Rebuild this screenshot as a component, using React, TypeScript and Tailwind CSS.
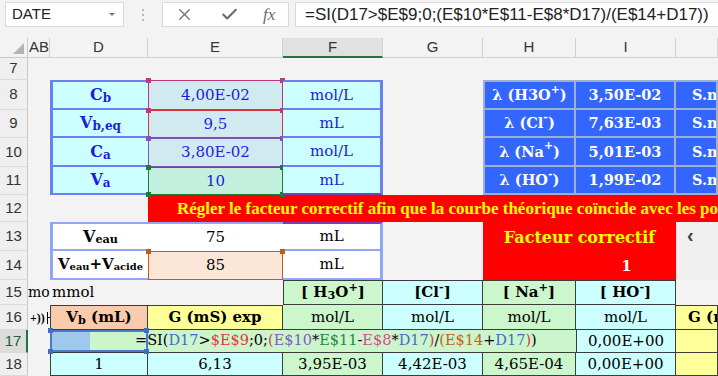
import React from 'react';
import { X, Check } from 'lucide-react';

// Sheet geometry: columns (row header, AB, D..J) and rows (header, 7..18)
const serif = "font-['DejaVu_Serif',serif]";
const sans = "font-['Liberation_Sans',Arial,sans-serif]";

const ROW_NUMBERS = [7, 8, 9, 10, 11, 12, 13, 14, 15, 16, 17, 18];
const ROW_STARTS = [
  'row-start-2', 'row-start-3', 'row-start-4', 'row-start-5', 'row-start-6', 'row-start-7',
  'row-start-8', 'row-start-9', 'row-start-10', 'row-start-11', 'row-start-12', 'row-start-13',
];

const COL_HEADERS = [
  { label: 'AB', cls: 'col-start-2 justify-start pl-[1px]' },
  { label: 'D', cls: 'col-start-3' },
  { label: 'E', cls: 'col-start-4' },
  { label: 'F', cls: 'col-start-5 bg-[#e1e1e1] text-[#1f6b3a] border-b-2 border-b-[#217346]' },
  { label: 'G', cls: 'col-start-6' },
  { label: 'H', cls: 'col-start-7' },
  { label: 'I', cls: 'col-start-8' },
  { label: '', cls: 'col-start-9' },
];

function Handle({ pos, color }: { pos: string; color: string }) {
  return <span className={`absolute w-[5px] h-[5px] ${pos} ${color}`} />;
}

function Formula() {
  return (
    <>
      <span>=SI(</span>
      <span className="text-[#3b6fc6]">D17</span>
      <span>&gt;</span>
      <span className="text-[#e0383b]">$E$9</span>
      <span>;0;</span>
      <span className="text-[#d0405a]">(</span>
      <span className="text-[#7d5bbf]">E$10</span>
      <span>*</span>
      <span className="text-[#1e8a3c]">E$11</span>
      <span>-</span>
      <span className="text-[#d24b8e]">E$8</span>
      <span>*</span>
      <span className="text-[#3b6fc6]">D17</span>
      <span className="text-[#d0405a]">)</span>
      <span>/</span>
      <span className="text-[#c8601a]">(E$14</span>
      <span>+</span>
      <span className="text-[#3b6fc6]">D17</span>
      <span className="text-[#d0405a]">)</span>
      <span>)</span>
    </>
  );
}

export default function App() {
  const blueCell = `relative flex items-center justify-center bg-[#ccffff] text-[#1d1de0] text-[15px] ${serif}`;
  const label = 'font-bold text-[16px]';
  const lamb = `flex items-center justify-center bg-[#3366ff] text-white font-bold text-[14.5px] border-[#9fb0cc] border-r-2 border-b-2 ${serif} whitespace-nowrap overflow-hidden`;
  const dark = `flex items-center justify-center border-[#3c3c3c] border-r border-b text-[15px] text-black ${serif} whitespace-nowrap overflow-hidden`;

  return (
    <div className="w-[718px] h-[376px] overflow-hidden bg-[#f3f3f3] select-none">
      {/* Formula bar */}
      <div className={`h-[38px] flex items-start pt-[2px] gap-0 ${sans}`}>
        <div className="ml-[5px] w-[119px] h-[25px] bg-white border border-[#dadada] flex items-center justify-between pl-[6px] pr-[8px]">
          <span className="text-[15px] text-[#222]">DATE</span>
          <span className="w-0 h-0 border-l-[3px] border-r-[3px] border-t-[3px] border-l-transparent border-r-transparent border-t-[#777]" />
        </div>
        <div className="w-[38px] h-[25px] flex flex-col items-center justify-center gap-[3px]">
          <span className="w-[2px] h-[2px] bg-[#b8b8b8]" />
          <span className="w-[2px] h-[2px] bg-[#b8b8b8]" />
          <span className="w-[2px] h-[2px] bg-[#b8b8b8]" />
        </div>
        <div className="w-[127px] h-[25px] bg-white border border-[#dadada] flex items-center pl-[12px] text-[#6a6a6a]">
          <X size={19} strokeWidth={1.5} />
          <Check size={19} strokeWidth={2.6} className="ml-[26px]" />
          <span className="ml-[24px] italic text-[17px] font-['Liberation_Serif',serif]">fx</span>
        </div>
        <div className="ml-[6px] flex-1 h-[25px] bg-white border border-[#dadada] border-r-0 flex items-center pl-[9px] text-[17px] text-[#222] whitespace-nowrap overflow-hidden">
          =SI(D17&gt;$E$9;0;(E$10*E$11-E$8*D17)/(E$14+D17))
        </div>
      </div>

      {/* Sheet */}
      <div className="grid grid-cols-[28px_22px_98px_135px_100px_100px_93px_100px_42px] grid-rows-[20px_22px_30px_28px_29px_28px_27px_29px_29px_25px_25px_23px_23px]">
        {/* corner */}
        <div className="col-start-1 row-start-1 relative border-r border-b border-[#c9c9c9]">
          <span className="absolute right-[3px] bottom-[3px] w-0 h-0 border-b-[11px] border-l-[11px] border-b-[#b4b4b4] border-l-transparent" />
        </div>
        {COL_HEADERS.map((h) => (
          <div key={h.label + h.cls} className={`row-start-1 flex items-center justify-center text-[15px] text-[#333] border-r border-b border-[#d0d0d0] ${sans} ${h.cls}`}>
            {h.label}
          </div>
        ))}

        {/* row numbers */}
        {ROW_NUMBERS.map((n, i) => (
          <div
            key={n}
            className={`col-start-1 ${ROW_STARTS[i]} flex items-center justify-center text-[15px] border-b border-[#dadada] ${sans} ${n === 17 ? 'bg-[#dcdcdc] text-[#1f5e35] border-r-2 border-r-[#217346]' : 'bg-[#efefef] text-[#333] border-r border-r-[#c9c9c9]'}`}
          >
            {n}
          </div>
        ))}

        {/* D8:F11 parameters */}
        <div className={`col-start-3 row-start-3 ${label} border-l-[3px] border-t-2 border-b-2 border-[#6b7ef2] ${blueCell}`}>C<sub>b</sub></div>
        <div className={`col-start-3 row-start-4 ${label} border-l-[3px] border-b-2 border-[#6b7ef2] ${blueCell}`}>V<sub>b,eq</sub></div>
        <div className={`col-start-3 row-start-5 ${label} border-l-[3px] border-b-2 border-[#6b7ef2] ${blueCell}`}>C<sub>a</sub></div>
        <div className={`col-start-3 row-start-6 ${label} border-l-[3px] border-b-2 border-[#6b7ef2] ${blueCell}`}>V<sub>a</sub></div>

        <div className={`col-start-4 row-start-3 !bg-[#d0eaf0] border-[1.5px] border-[#c4367c] ${blueCell}`}>
          4,00E-02
          <Handle pos="-left-[3px] -top-[3px]" color="bg-[#c4367c]" />
          <Handle pos="-right-[3px] -top-[3px]" color="bg-[#c4367c]" />
        </div>
        <div className={`col-start-4 row-start-4 !bg-[#d0eaf0] border-[1.5px] border-[#d8343c] ${blueCell}`}>
          9,5
          <Handle pos="-left-[3px] -top-[3px]" color="bg-[#c4367c]" />
          <Handle pos="-right-[3px] -top-[3px]" color="bg-[#c4367c]" />
        </div>
        <div className={`col-start-4 row-start-5 !bg-[#d0eaf0] border-[1.5px] border-[#8256b8] ${blueCell}`}>
          3,80E-02
          <Handle pos="-left-[3px] -top-[3px]" color="bg-[#8256b8]" />
          <Handle pos="-right-[3px] -top-[3px]" color="bg-[#8256b8]" />
        </div>
        <div className={`col-start-4 row-start-6 !bg-[#c3f0de] border-[1.5px] border-[#1f7c33] ${blueCell}`}>
          10
          <Handle pos="-left-[3px] -top-[3px]" color="bg-[#1f7c33]" />
          <Handle pos="-right-[3px] -top-[3px]" color="bg-[#1f7c33]" />
          <Handle pos="-left-[3px] -bottom-[3px]" color="bg-[#1f7c33]" />
          <Handle pos="-right-[3px] -bottom-[3px]" color="bg-[#1f7c33]" />
        </div>

        <div className={`col-start-5 row-start-3 border-r-[3px] border-t-2 border-b-2 border-[#6b7ef2] ${blueCell}`}>mol/L</div>
        <div className={`col-start-5 row-start-4 border-r-[3px] border-b-2 border-[#6b7ef2] ${blueCell}`}>mL</div>
        <div className={`col-start-5 row-start-5 border-r-[3px] border-b-2 border-[#6b7ef2] ${blueCell}`}>mol/L</div>
        <div className={`col-start-5 row-start-6 border-r-[3px] border-b-2 border-b-[#7a40b0] border-[#6b7ef2] ${blueCell}`}>mL</div>

        {/* conductivities */}
        <div className={`col-start-7 row-start-3 border-l-2 border-t-2 ${lamb}`}>λ (H3O<sup>+</sup>)</div>
        <div className={`col-start-7 row-start-4 border-l-2 ${lamb}`}>λ (Cl<sup>-</sup>)</div>
        <div className={`col-start-7 row-start-5 border-l-2 ${lamb}`}>λ (Na<sup>+</sup>)</div>
        <div className={`col-start-7 row-start-6 border-l-2 ${lamb}`}>λ (HO<sup>-</sup>)</div>
        <div className={`col-start-8 row-start-3 border-t-2 ${lamb}`}>3,50E-02</div>
        <div className={`col-start-8 row-start-4 ${lamb}`}>7,63E-03</div>
        <div className={`col-start-8 row-start-5 ${lamb}`}>5,01E-03</div>
        <div className={`col-start-8 row-start-6 ${lamb}`}>1,99E-02</div>
        <div className={`col-start-9 row-start-3 border-t-2 !justify-start pl-[16px] ${lamb}`}>S.m</div>
        <div className={`col-start-9 row-start-4 !justify-start pl-[16px] ${lamb}`}>S.m</div>
        <div className={`col-start-9 row-start-5 !justify-start pl-[16px] ${lamb}`}>S.m</div>
        <div className={`col-start-9 row-start-6 !justify-start pl-[16px] ${lamb}`}>S.m</div>

        {/* row 12 banner */}
        <div className="col-start-4 col-span-6 row-start-7 bg-[#ff0000] text-[#ffff00] font-bold text-[17px] flex items-center pl-[29px] whitespace-nowrap overflow-hidden font-['Liberation_Serif',serif]">
          Régler le facteur correctif afin que la courbe théorique coïncide avec les points expérimentaux
        </div>

        {/* rows 13-14 */}
        <div className={`col-start-3 row-start-8 bg-white flex items-center justify-center font-bold text-[16px] border-l-[3px] border-b-2 border-t-2 border-[#8ea8f6] ${serif}`}>V<sub className="text-[0.7em]">eau</sub></div>
        <div className={`col-start-3 row-start-9 bg-white flex items-center justify-center font-bold text-[15px] border-l-[3px] border-b-2 border-[#8ea8f6] whitespace-nowrap ${serif}`}>V<sub className="text-[0.66em]">eau</sub>+V<sub className="text-[0.66em]">acide</sub></div>
        <div className={`col-start-4 row-start-8 bg-white flex items-center justify-center text-[15px] border-t-2 border-t-[#8ea8f6] ${serif}`}>75</div>
        <div className={`col-start-4 row-start-9 relative bg-[#fbe6d8] flex items-center justify-center text-[15px] border-[1.5px] border-[#c55a11] ${serif}`}>
          85
          <Handle pos="-left-[3px] -top-[3px]" color="bg-[#c55a11]" />
          <Handle pos="-right-[3px] -top-[3px]" color="bg-[#c55a11]" />
        </div>
        <div className={`col-start-5 row-start-8 bg-white flex items-center justify-center text-[15px] border-r-[3px] border-b-2 border-t-2 border-[#8ea8f6] border-t-[#7a40b0] ${serif}`}>mL</div>
        <div className={`col-start-5 row-start-9 bg-white flex items-center justify-center text-[15px] border-r-[3px] border-b-2 border-[#8ea8f6] ${serif}`}>mL</div>

        <div className={`col-start-7 col-span-2 row-start-8 row-span-2 bg-[#ff0000] flex flex-col items-center pt-[4px] font-bold ${serif}`}>
          <span className="text-[#ffff00] text-[16px] leading-[24px]">Facteur correctif</span>
          <span className="text-white text-[15px] leading-[24px] mt-[4px] ml-[94px]">1</span>
        </div>
        <div className="col-start-9 row-start-8 row-span-2 bg-[#f0f0f0] border-l border-[#e2e2e2] flex items-start pt-[3px] pl-[10px]">
          <span className={`text-[#444] text-[20px] font-bold leading-[20px] ${sans}`}>‹</span>
        </div>

        {/* row 15 */}
        <div className={`col-start-2 row-start-10 flex items-center text-[14px] whitespace-nowrap overflow-hidden ${serif}`}>mo</div>
        <div className={`col-start-3 row-start-10 flex items-center pl-[2px] text-[15px] ${serif}`}>mmol</div>
        <div className={`col-start-5 row-start-10 bg-[#ccf7cc] font-bold border-l border-t ${dark}`}>[ H<sub>3</sub>O<sup>+</sup>]</div>
        <div className={`col-start-6 row-start-10 bg-[#ccffff] font-bold border-t ${dark}`}>[Cl <sup>-</sup>]</div>
        <div className={`col-start-7 row-start-10 bg-[#ccf7cc] font-bold border-t ${dark}`}>[ Na<sup>+</sup>]</div>
        <div className={`col-start-8 row-start-10 bg-[#ccffff] font-bold border-t ${dark}`}>[ HO<sup>-</sup>]</div>

        {/* row 16 */}
        <div className="col-start-2 row-start-11 flex items-center pl-[2px] overflow-hidden">
          <span className="text-[12px] font-bold leading-none font-['Liberation_Serif',serif]">+))</span>
          <span className="ml-[2px] w-[1px] h-[12px] bg-black" />
          <span className="w-[4px] h-[1px] bg-black" />
        </div>
        <div className={`col-start-3 row-start-11 bg-[#f8cbad] font-bold border-l border-t ${dark}`}>V<sub>b</sub>&nbsp;(mL)</div>
        <div className={`col-start-4 row-start-11 bg-[#ffff99] font-bold border-t ${dark}`}>G (mS) exp</div>
        <div className={`col-start-5 row-start-11 bg-[#ccf7cc] ${dark}`}>mol/L</div>
        <div className={`col-start-6 row-start-11 bg-[#ccffff] ${dark}`}>mol/L</div>
        <div className={`col-start-7 row-start-11 bg-[#ccf7cc] ${dark}`}>mol/L</div>
        <div className={`col-start-8 row-start-11 bg-[#ccffff] ${dark}`}>mol/L</div>
        <div className={`col-start-9 row-start-11 bg-[#ffff99] font-bold border-t !justify-start pl-[12px] ${dark}`}>G (mS) th</div>

        {/* row 17: cell being edited */}
        <div className={`col-start-3 col-span-5 row-start-12 relative bg-[#ccf5cc] border-b border-[#3c3c3c] flex items-center pl-[85px] text-[14.5px] whitespace-nowrap ${serif}`}>
          <span className="absolute left-[1px] top-[2px] bottom-[2px] w-[39px] bg-[#9fc8ec]" />
          <span className="absolute left-0 top-0 w-[98px] bottom-0 border-2 border-[#4a7cc4]" />
          <Handle pos="-left-[2px] -top-[2px]" color="bg-[#3b6fc6]" />
          <Handle pos="left-[94px] -top-[2px]" color="bg-[#3b6fc6]" />
          <Handle pos="-left-[2px] -bottom-[2px]" color="bg-[#3b6fc6]" />
          <Handle pos="left-[94px] -bottom-[2px]" color="bg-[#3b6fc6]" />
          <span className="relative">
            <Formula />
          </span>
        </div>
        <div className={`col-start-8 row-start-12 bg-[#ccffff] border-l ${dark}`}>0,00E+00</div>
        <div className={`col-start-9 row-start-12 bg-[#ffff99] ${dark}`}></div>

        {/* row 18 */}
        <div className={`col-start-3 row-start-13 bg-[#ccffff] border-l ${dark}`}>1</div>
        <div className={`col-start-4 row-start-13 bg-[#ccffff] ${dark}`}>6,13</div>
        <div className={`col-start-5 row-start-13 bg-[#ccf7cc] ${dark}`}>3,95E-03</div>
        <div className={`col-start-6 row-start-13 bg-[#ccffff] ${dark}`}>4,42E-03</div>
        <div className={`col-start-7 row-start-13 bg-[#ccf7cc] ${dark}`}>4,65E-04</div>
        <div className={`col-start-8 row-start-13 bg-[#ccffff] ${dark}`}>0,00E+00</div>
        <div className={`col-start-9 row-start-13 bg-[#ffff99] ${dark}`}></div>
      </div>
    </div>
  );
}
